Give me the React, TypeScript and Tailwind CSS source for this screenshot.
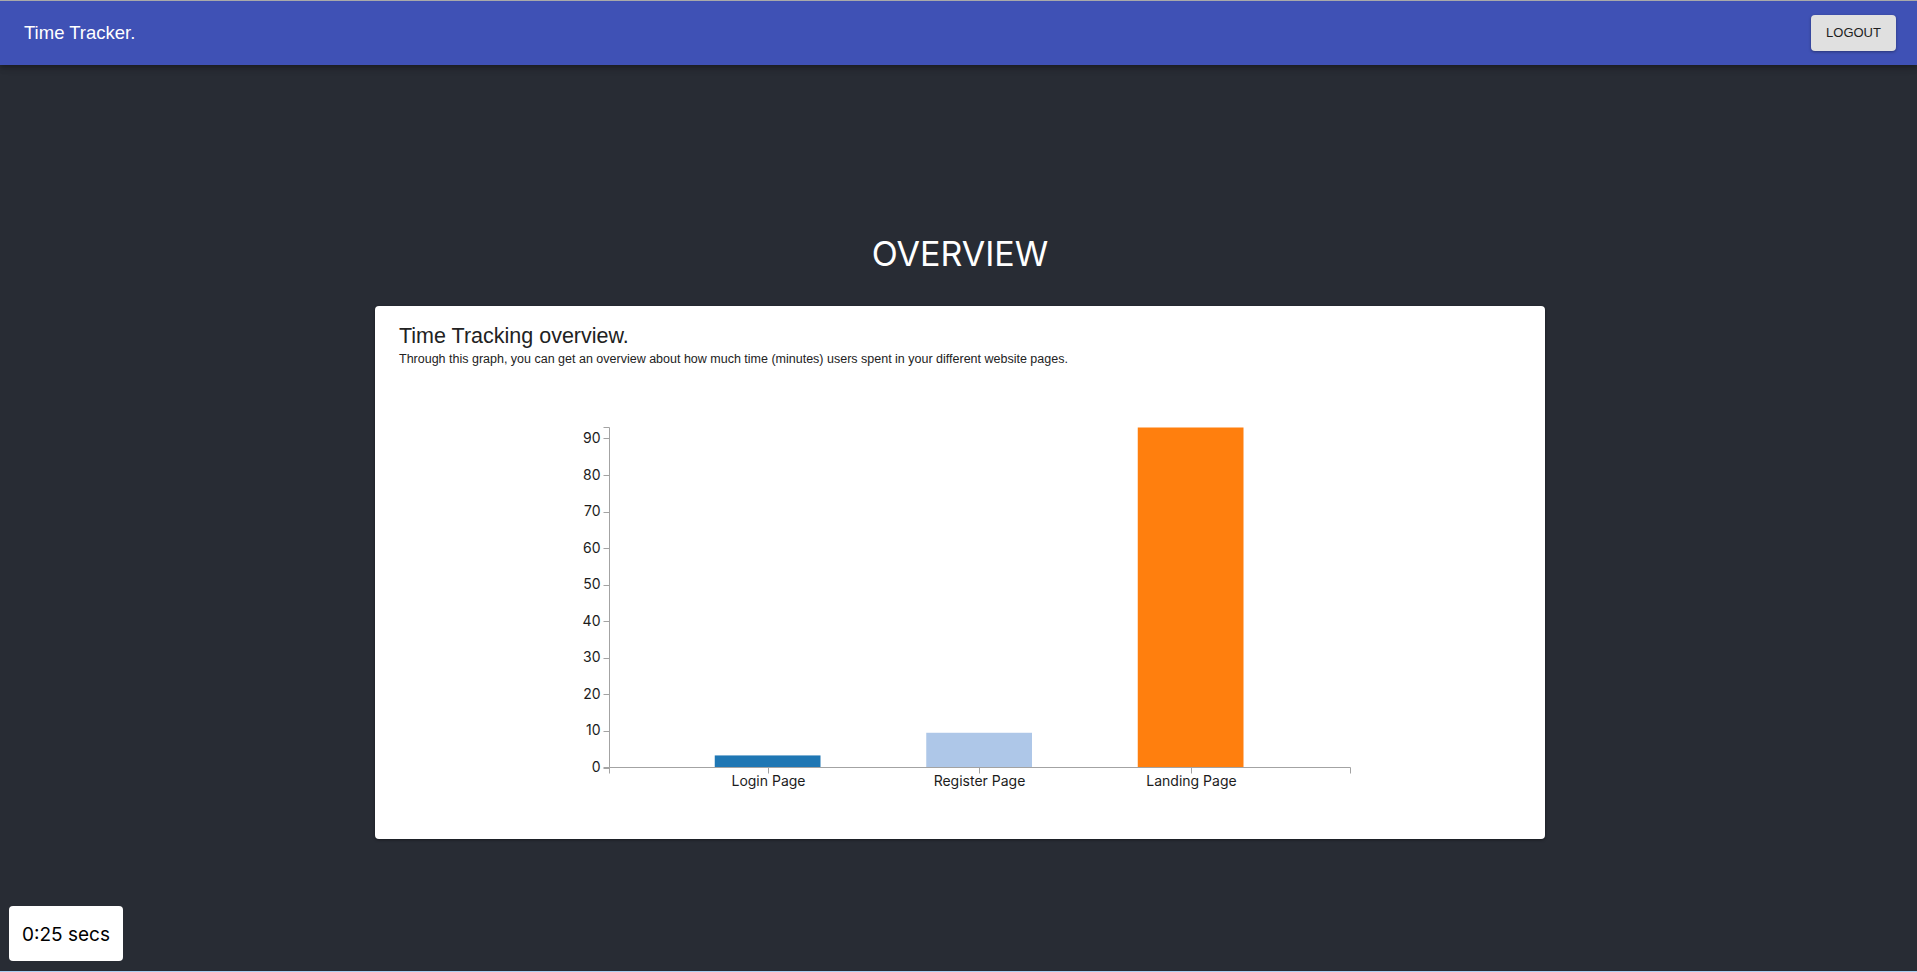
import React from "react";

const bars = [
  { label: "Login Page", value: 3.3, color: "#1f77b4" },
  { label: "Register Page", value: 9.5, color: "#aec7e8" },
  { label: "Landing Page", value: 93, color: "#ff7f0e" },
];

const AXIS_X = 234.5;
const BASE_Y = 399.5;
const TOP_Y = 59.5;
const RIGHT_X = 975.5;
const MAX = 93;
const yOf = (v: number) => BASE_Y - (v * (BASE_Y - TOP_Y)) / MAX;
const STEP = 211.5;
const BAND = 105.75;
const START = 339.75;

function Chart() {
  const ticks = [0, 10, 20, 30, 40, 50, 60, 70, 80, 90];
  const axis = "#a3a3a3";
  return (
    <svg width="1170" height="471" className="block" style={{ fontFamily: "Inter, 'Noto Sans', sans-serif" }}>
      {bars.map((b, i) => {
        const x = START + i * STEP;
        const y = yOf(b.value);
        return <rect key={b.label} x={x} y={y} width={BAND} height={BASE_Y - y} fill={b.color} />;
      })}
      {/* y axis */}
      <path d={`M${AXIS_X - 6},${TOP_Y}H${AXIS_X}V${BASE_Y}H${AXIS_X - 6}`} fill="none" stroke={axis} />
      {ticks.map((t) => (
        <g key={t}>
          <line x1={AXIS_X - 6} x2={AXIS_X} y1={Math.round(yOf(t)) + 0.5} y2={Math.round(yOf(t)) + 0.5} stroke={axis} />
          <text x={AXIS_X - 9} y={yOf(t)} dy="0.32em" textAnchor="end" fontSize="14" fill="#1c1c1c">
            {t}
          </text>
        </g>
      ))}
      {/* x axis */}
      <path d={`M${AXIS_X},${BASE_Y + 6}V${BASE_Y}H${RIGHT_X}V${BASE_Y + 6}`} fill="none" stroke={axis} />
      {bars.map((b, i) => {
        const cx = Math.round(START + i * STEP + BAND / 2) + 0.5;
        return (
          <g key={b.label}>
            <line x1={cx} x2={cx} y1={BASE_Y} y2={BASE_Y + 6} stroke={axis} />
            <text x={cx} y={BASE_Y + 9} dy="0.71em" textAnchor="middle" fontSize="14" fill="#1c1c1c">
              {b.label}
            </text>
          </g>
        );
      })}
    </svg>
  );
}

export default function App() {
  return (
    <div className="min-h-[972px] h-[972px] bg-[#282c34] flex flex-col relative overflow-hidden border-b border-[#a9d0f2]">
      <header
        className="h-[65px] shrink-0 border-t border-[#a9a9a9] bg-[#3f51b5] flex items-center justify-between pl-6 pr-[21px] shadow-[0_2px_4px_-1px_rgba(0,0,0,0.2),0_4px_5px_0_rgba(0,0,0,0.14),0_1px_10px_0_rgba(0,0,0,0.12)] relative z-10"
        style={{ fontFamily: "'Liberation Sans', Arial, sans-serif" }}
      >
        <div className="text-[18.5px] text-white leading-none">Time Tracker.</div>
        <button className="h-9 w-[85px] rounded bg-[#e0e0e0] text-[13px] text-[#1e1e1e] uppercase shadow-[0_1px_3px_rgba(0,0,0,0.35)]">
          Logout
        </button>
      </header>

      <main className="flex flex-col items-center pl-[3px] pt-[169px]">
        <h1
          className="text-[34px] leading-[40px] text-white font-normal"
          style={{ fontFamily: "Inter, 'Noto Sans', sans-serif" }}
        >
          OVERVIEW
        </h1>
        <section className="mt-8 w-[1170px] h-[533px] bg-white rounded shadow-[0_1px_3px_rgba(0,0,0,0.4)] flex flex-col">
          <div className="px-6 pt-4" style={{ fontFamily: "'Liberation Sans', Arial, sans-serif" }}>
            <h2 className="text-[21.5px] leading-[28px] text-[#222]">Time Tracking overview.</h2>
            <p className="text-[12.5px] leading-[17px] text-[#222] mt-[1px]">
              Through this graph, you can get an overview about how much time (minutes) users spent in your different website pages.
            </p>
          </div>
          <Chart />
        </section>
      </main>

      <div
        className="absolute left-[9px] bottom-[10px] w-[114px] h-[55px] pt-1 bg-white rounded flex items-center justify-center text-[19px] text-black"
        style={{ fontFamily: "Inter, 'Noto Sans', sans-serif" }}
      >
        0:25 secs
      </div>
    </div>
  );
}
